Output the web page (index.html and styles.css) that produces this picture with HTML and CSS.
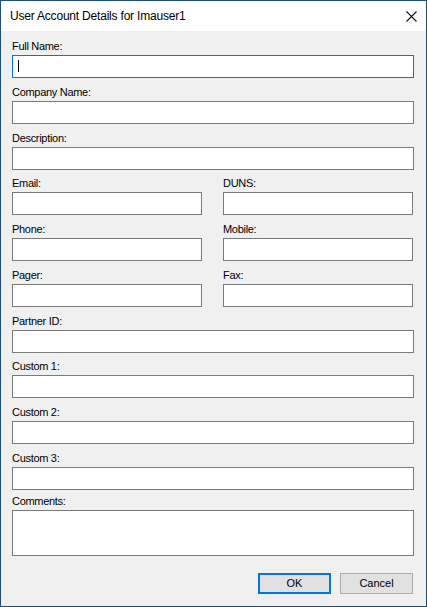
FILE: index.html
```html
<!DOCTYPE html>
<html>
<head>
<meta charset="utf-8">
<link rel="stylesheet" href="styles.css">
</head>
<body>
<div class="window">
  <div class="titlebar">
    <span class="title">User Account Details for Imauser1</span>
    <svg class="close" width="11" height="11" viewBox="0 0 11 11"><path d="M0.5 0.5 L10.5 10.5 M10.5 0.5 L0.5 10.5" stroke="#111" stroke-width="1.1" fill="none"/></svg>
  </div>
  <div class="content">
    <div class="field first">
      <label class="lbl">Full Name:</label>
      <div class="box focus"><span class="caret"></span></div>
    </div>
    <div class="field">
      <label class="lbl">Company Name:</label>
      <div class="box"></div>
    </div>
    <div class="field">
      <label class="lbl">Description:</label>
      <div class="box"></div>
    </div>
    <div class="pair">
      <div class="field"><label class="lbl">Email:</label><div class="box"></div></div>
      <div class="field"><label class="lbl">DUNS:</label><div class="box"></div></div>
    </div>
    <div class="pair">
      <div class="field"><label class="lbl">Phone:</label><div class="box"></div></div>
      <div class="field"><label class="lbl">Mobile:</label><div class="box"></div></div>
    </div>
    <div class="pair">
      <div class="field"><label class="lbl">Pager:</label><div class="box"></div></div>
      <div class="field"><label class="lbl">Fax:</label><div class="box"></div></div>
    </div>
    <div class="field">
      <label class="lbl">Partner ID:</label>
      <div class="box"></div>
    </div>
    <div class="field">
      <label class="lbl">Custom 1:</label>
      <div class="box"></div>
    </div>
    <div class="field">
      <label class="lbl">Custom 2:</label>
      <div class="box"></div>
    </div>
    <div class="field">
      <label class="lbl">Custom 3:</label>
      <div class="box"></div>
    </div>
    <div class="field comments">
      <label class="lbl">Comments:</label>
      <div class="box tall"></div>
    </div>
    <div class="buttons">
      <button class="btn default">OK</button>
      <button class="btn">Cancel</button>
    </div>
  </div>
</div>
</body>
</html>
```

FILE: styles.css
```css
html, body {
  margin: 0;
  padding: 0;
  background: #f0f0f0;
}
.window {
  width: 427px;
  height: 607px;
  box-sizing: border-box;
  border: 1px solid #1f4e7a;
  background: #f0f0f0;
  display: flex;
  flex-direction: column;
  font-family: "Liberation Sans", Arial, sans-serif;
  font-size: 11px;
  color: #000;
}
.titlebar {
  height: 30px;
  flex: none;
  background: #fff;
  display: flex;
  align-items: center;
  justify-content: space-between;
  padding: 0 9px 0 9px;
}
.title {
  line-height: 15px;
  font-size: 12px;
  letter-spacing: -0.2px;
  color: #000;
}
.close {
  display: block;
}
.content {
  padding: 1.25px 12px 0 11px;
  display: flex;
  flex-direction: column;
}
.field {
  display: flex;
  flex-direction: column;
}
.lbl {
  display: block;
  height: 22.75px;
  box-sizing: border-box;
  padding-top: 6.75px;
  line-height: 15px;
  letter-spacing: -0.3px;
}
.comments .lbl {
  height: 20px;
  padding-top: 4px;
}
.box {
  height: 23px;
  box-sizing: border-box;
  border: 1px solid #7a7a7a;
  background: #fff;
  position: relative;
}
.box.focus {
  border-color: #0078d7;
}
.caret {
  position: absolute;
  left: 5px;
  top: 4px;
  width: 1px;
  height: 12px;
  background: #000;
}
.box.tall {
  height: 46px;
}
.pair {
  display: grid;
  grid-template-columns: 190px 190px;
  column-gap: 21px;
}
.buttons {
  display: flex;
  justify-content: flex-end;
  gap: 9px;
  margin-top: 17px;
  padding-right: 1px;
}
.btn {
  width: 73px;
  height: 21px;
  box-sizing: border-box;
  border: 1px solid #adadad;
  background: #e1e1e1;
  font-family: "Liberation Sans", Arial, sans-serif;
  font-size: 11px;
  color: #000;
  padding: 0;
  margin: 0;
  line-height: 15px;
}
.btn.default {
  border: 2px solid #0078d7;
}
```
